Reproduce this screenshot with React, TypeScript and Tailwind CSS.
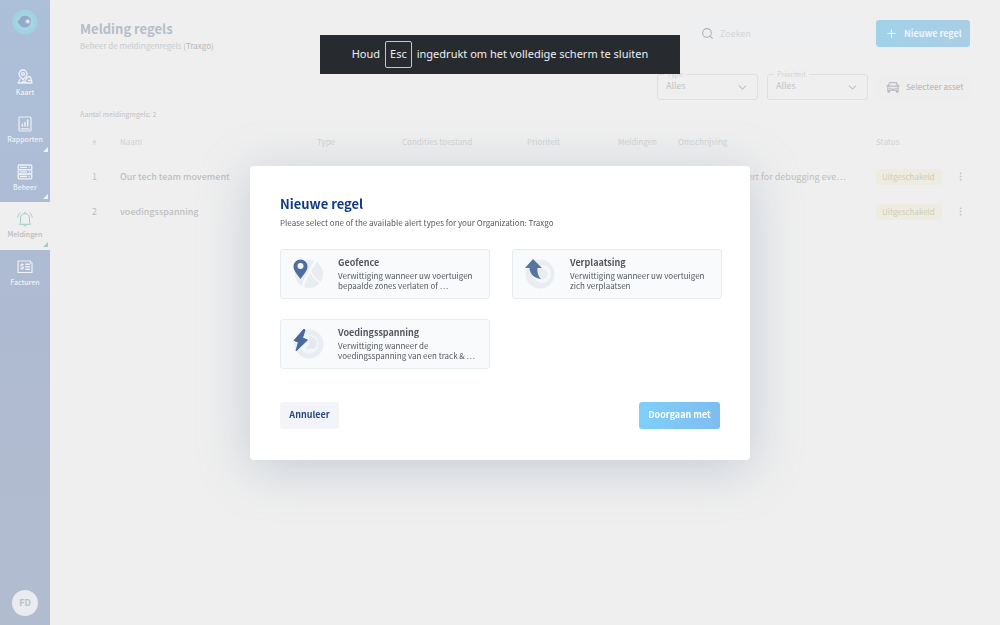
import React from "react";
import { ChevronDown, MoreVertical, Plus, Search } from "lucide-react";

type IconProps = { className?: string };

function Logo() {
  return (
    <svg viewBox="0 0 26 26" className="size-[26px]" aria-hidden="true">
      <circle cx="13" cy="13" r="12.5" fill="#9fd3e0" />
      <circle cx="13" cy="13" r="9" fill="#a9d5e2" />
      <path d="M5.500 13 9.500 7.500c3-1.500 7.500-.5 9 2.500 1 3-.5 7-3.500 8-2.500.8-5 .3-6.500-1z" fill="#8fabc6" />
      <circle cx="15.500" cy="12.500" r="2.500" fill="#c9b6d2" />
      <circle cx="15.800" cy="12.300" r="1.500" fill="#f3f0f6" />
    </svg>
  );
}

function MapIcon({ className }: IconProps) {
  return (
    <svg viewBox="0 0 16 16" className={className} fill="none" stroke="currentColor" strokeWidth="1.300" strokeLinejoin="round" strokeLinecap="round" aria-hidden="true">
      <path d="M6 10.500C3.600 8.500 2 7 2 5a4 4 0 0 1 8 0c0 2-1.600 3.500-4 5.500z" />
      <circle cx="6" cy="5" r="1.400" />
      <path d="M3 10.500 1 14h14l-1-4.500a2.200 2.200 0 0 0-4-.8L8.500 11M4.500 13.500 7 12l2.500 1.500M11.500 11.500h1.500" />
    </svg>
  );
}

function ReportIcon({ className }: IconProps) {
  return (
    <svg viewBox="0 0 16 16" className={className} fill="none" stroke="currentColor" strokeWidth="1.200" strokeLinecap="round" strokeLinejoin="round" aria-hidden="true">
      <rect x="2" y="1" width="12" height="14" rx="1" />
      <path d="M4 12.800h8" />
      <path d="M5.300 10V8.500M8 10V6.500M10.700 10V4" strokeWidth="1.500" />
    </svg>
  );
}

function ManageIcon({ className }: IconProps) {
  return (
    <svg viewBox="0 0 16 16" className={className} fill="none" stroke="currentColor" strokeWidth="1.300" strokeLinecap="round" strokeLinejoin="round" aria-hidden="true">
      <rect x="1.200" y="1" width="13.600" height="4.600" rx="1" />
      <rect x="1.200" y="5.600" width="13.600" height="4.600" rx="1" />
      <rect x="1.200" y="10.200" width="13.600" height="4.600" rx="1" />
      <path d="M3.500 3.300h6M3.500 7.900h6M3.500 12.500h6M12.300 3.300h.1M12.300 7.900h.1M12.300 12.500h.1" />
    </svg>
  );
}

function AlertIcon({ className }: IconProps) {
  return (
    <svg viewBox="0 0 16 16" className={className} fill="none" stroke="currentColor" strokeWidth="1" strokeLinecap="round" strokeLinejoin="round" aria-hidden="true">
      <path d="M8 1v1.300M2.500 13.300h11L12.500 11.500V7a4.500 4.500 0 0 0-9 0v4.500zM6.500 13.500a1.500 1.500 0 0 0 3 0" />
      <path d="M3 1.800A6 6 0 0 0 .8 6M13 1.800A6 6 0 0 1 15.200 6" />
    </svg>
  );
}

function InvoiceIcon({ className }: IconProps) {
  return (
    <svg viewBox="0 0 16 16" className={className} fill="none" stroke="currentColor" strokeWidth="1.200" strokeLinecap="round" strokeLinejoin="round" aria-hidden="true">
      <path d="M1 2h12.500v2H15v9.500H1z" />
      <path d="M6.300 5.700c-.5-.5-2.500-.6-2.500.6s2.600.8 2.600 2.100-2.100 1.300-2.700.6M5 4.700v.6M5 9.600v.7" />
      <path d="M8.800 5.300h3.700M8.800 7.800h3.700M8.800 10.300h3.700" strokeWidth="1.400" />
    </svg>
  );
}

function CarIcon({ className }: IconProps) {
  return (
    <svg viewBox="0 0 16 14" className={className} fill="none" stroke="currentColor" strokeWidth="1.500" strokeLinejoin="round" strokeLinecap="round" aria-hidden="true">
      <path d="M2.500 6 4 2h8l1.500 4M2 6h12v5H2zM2.300 11v2h1.600v-2M12.100 11v2h1.600v-2M1 5.300h1M14 5.300h1" />
      <path d="M4 8.500h1M11 8.500h1M6.500 9.500h3" />
    </svg>
  );
}

function GeofenceArt() {
  return (
    <svg viewBox="0 0 32 32" className="size-8" aria-hidden="true">
      <circle cx="17" cy="17" r="14" fill="#e9edf1" />
      <path d="M23.500 3.500C21 11 13 18 10.500 31" stroke="#f8fafc" strokeWidth="2.500" fill="none" />
      <path d="M19 15c2 5 5 8 10 11" stroke="#f8fafc" strokeWidth="1.500" fill="none" />
      <path d="M8.500 22C5 17 1.500 13.500 1.500 9.500a7 7 0 0 1 14 0C15.500 13.500 12 17 8.500 22z" fill="#4d6c9f" />
      <circle cx="8.500" cy="9" r="3" fill="#f5f8fb" />
    </svg>
  );
}

function MovementArt() {
  return (
    <svg viewBox="0 0 32 32" className="size-8" aria-hidden="true">
      <circle cx="16" cy="17" r="14.500" fill="#e9edf1" />
      <circle cx="18" cy="17" r="9" fill="#f5f7f9" />
      <circle cx="18" cy="17" r="5.500" fill="#e9edf1" />
      <path d="M9 2 1 11h4.500c.3 6 4.500 10 11.500 11-3-3-4-6.500-3.500-11H18z" fill="#56759f" />
    </svg>
  );
}

function VoltageArt() {
  return (
    <svg viewBox="0 0 32 32" className="size-8" aria-hidden="true">
      <circle cx="17" cy="17" r="14.500" fill="#e9edf1" />
      <circle cx="17" cy="17" r="9.500" fill="#f3f6f8" />
      <path d="M17 9v9l-4 4h9a7 7 0 0 0-1-12z" fill="#e5e9ee" />
      <path d="M12 2 2 13.500l4.500 1.500L4 24 15.500 13l-5-2L13 3z" fill="#47699b" stroke="#47699b" strokeLinejoin="round" />
    </svg>
  );
}

const navItems = [
  { label: "Kaart", Icon: MapIcon, corner: false, active: false },
  { label: "Rapporten", Icon: ReportIcon, corner: true, active: false },
  { label: "Beheer", Icon: ManageIcon, corner: true, active: false },
  { label: "Meldingen", Icon: AlertIcon, corner: true, active: true },
  { label: "Facturen", Icon: InvoiceIcon, corner: false, active: false },
];

function Sidebar() {
  return (
    <aside className="flex w-[50px] shrink-0 flex-col items-center bg-linear-to-b from-[#acc0d9] via-[#aebad1] to-[#b2bccf] pt-[9px] pb-[9px]">
      <Logo />
      <nav aria-label="Hoofdmenu" className="mt-[25px] grid h-[237px] w-full grid-rows-5">
        {navItems.map(({ label, Icon, corner, active }) => (
          <a
            key={label}
            href="#"
            className={
              active
                ? "relative flex flex-col items-center bg-[#efefef] pt-[9px] text-[#b9bcc0]"
                : "relative flex flex-col items-center pt-[9px] text-[#eef1f5]"
            }
          >
            <Icon className={active ? "size-4 text-[#a2cdcf]" : "size-4"} />
            <span className="mt-[2px] text-[7px] leading-[10px] font-medium">{label}</span>
            {corner && (
              <svg viewBox="0 0 4 4" className={active ? "absolute right-[2px] bottom-[3px] size-[5px] text-[#a2cdcf]" : "absolute right-[2px] bottom-[3px] size-[5px]"} aria-hidden="true">
                <path d="M4 0v4H0z" fill="currentColor" />
              </svg>
            )}
          </a>
        ))}
      </nav>
      <button type="button" className="mt-auto flex size-[26px] items-center justify-center rounded-full bg-[#e9ebef] text-[9px] font-bold text-[#bcc0c5]">
        FD
      </button>
    </aside>
  );
}

function Filter({ id, label }: { id: string; label: string }) {
  return (
    <div className="relative h-[26px] w-[101px] rounded-[3px] border border-[#dedfe0]">
      <label htmlFor={id} className="absolute -top-[6px] left-[6px] bg-[#efefef] px-[3px] text-[7px] leading-[10px] text-[#d2d4d6]">
        {label}
      </label>
      <select id={id} className="block h-6 w-full appearance-none bg-transparent px-2 pb-[2px] text-[9px] leading-[22px] text-[#c3c5c8]">
        <option>Alles</option>
      </select>
      <ChevronDown className="pointer-events-none absolute top-[6px] right-[8px] size-[13px] text-[#c0c3c6]" />
    </div>
  );
}

const rules = [
  { nr: 1, name: "Our tech team movement", description: "Our tech team alert for debugging eve…" },
  { nr: 2, name: "voedingsspanning", description: "" },
];

function RulesTable() {
  return (
    <table className="mt-[5px] w-full table-fixed text-left">
      <thead>
        <tr className="h-[35px] text-[8px] text-[#d0d2d4]">
          <th className="w-[40px] pl-3 font-normal">#</th>
          <th className="w-[197px] font-normal">Naam</th>
          <th className="w-[85px] font-normal">Type</th>
          <th className="w-[125px] font-normal">Condities toestand</th>
          <th className="w-[91px] font-normal">Prioriteit</th>
          <th className="w-[60px] font-normal">Meldingen</th>
          <th className="font-normal">Omschrijving</th>
          <th className="w-[79px] font-normal">Status</th>
          <th className="w-[15px]" aria-label="Acties" />
        </tr>
      </thead>
      <tbody>
        {rules.map((rule) => (
          <tr key={rule.nr} className="h-[35px] text-[9px] text-[#bdbfc2]">
            <td className="pl-3">{rule.nr}</td>
            <td className="whitespace-nowrap font-medium">{rule.name}</td>
            <td />
            <td />
            <td />
            <td />
            <td className="whitespace-nowrap">{rule.description}</td>
            <td>
              <span className="block h-4 w-[66px] rounded-[4px] bg-[#eeece0] px-[6px] text-[8px] leading-4 text-[#cfccb8]">Uitgeschakeld</span>
            </td>
            <td>
              <button type="button" aria-label="Meer opties" className="flex w-[11px] justify-center">
                <MoreVertical className="size-[11px]" />
              </button>
            </td>
          </tr>
        ))}
      </tbody>
    </table>
  );
}

function Page() {
  return (
    <main className="min-w-0 flex-1 bg-[#efefef] px-[30px]">
      <header className="flex items-start justify-between pt-5">
        <div>
          <h1 className="text-[13px] leading-[18px] font-bold text-[#b7bdc9]">Melding regels</h1>
          <p className="mt-[3px] text-[8px] leading-[10px] text-[#c8cacc]">
            Beheer de meldingenregels <span className="text-[#b5b7bb]">(Traxgo)</span>
          </p>
        </div>
        <div className="flex gap-[9px]">
          <label className="flex h-[27px] w-[175px] items-center gap-[6px] rounded-[3px] bg-[#eeeff1] px-[9px]">
            <Search className="size-[13px] shrink-0 text-[#b0b3b7]" />
            <input type="search" aria-label="Zoeken" placeholder="Zoeken" className="w-full min-w-0 bg-transparent text-[9px] outline-none placeholder:text-[#d4d6d8]" />
          </label>
          <button type="button" className="flex h-[27px] w-[94px] items-center gap-[6px] rounded-[3px] bg-linear-to-r from-[#a0d2e9] to-[#a9cee6] pl-[9px] text-[9px] font-bold whitespace-nowrap text-[#eef4f7]">
            <Plus className="size-[13px]" />
            Nieuwe regel
          </button>
        </div>
      </header>
      <div className="mt-[23px] flex items-center justify-end gap-[9px]">
        <Filter id="filter-type" label="Type" />
        <Filter id="filter-priority" label="Prioriteit" />
        <button type="button" className="flex h-[26px] w-[93px] items-center gap-[6px] rounded-[3px] bg-[#eeeeef] pl-[9px] text-[8px] font-medium whitespace-nowrap text-[#b9bcc0]">
          <CarIcon className="h-3 w-[14px]" />
          Selecteer asset
        </button>
      </div>
      <p className="mt-[9px] text-[7px] leading-[10px] text-[#c0c2c5]">Aantal meldingregels: 2</p>
      <RulesTable />
    </main>
  );
}

const alertTypes = [
  { title: "Geofence", text: ["Verwittiging wanneer uw voertuigen", "bepaalde zones verlaten of …"], Art: GeofenceArt },
  { title: "Verplaatsing", text: ["Verwittiging wanneer uw voertuigen", "zich verplaatsen"], Art: MovementArt },
  { title: "Voedingsspanning", text: ["Verwittiging wanneer de", "voedingsspanning van een track & …"], Art: VoltageArt },
];

function NewRuleDialog() {
  return (
    <div className="fixed inset-0 flex items-center justify-center">
      <section role="dialog" aria-modal="true" aria-labelledby="dialog-title" className="w-[500px] rounded-[4px] bg-white pt-[29px] pr-[28px] pb-[31px] pl-[30px] shadow-[0_8px_50px_#8b9bb36b]">
        <h2 id="dialog-title" className="text-[13px] leading-[18px] font-bold text-[#123a80]">Nieuwe regel</h2>
        <p className="mt-[5px] text-[8px] leading-[10px] text-[#55585d]">
          Please select one of the available alert types for your Organization: Traxgo
        </p>
        <div className="mt-[21px] grid grid-cols-2 gap-x-[22px] gap-y-5">
          {alertTypes.map(({ title, text, Art }) => (
            <button key={title} type="button" className="flex h-[50px] gap-[14px] rounded-[3px] border border-[#e7ecef] bg-[#f8fafc] pt-[7px] pl-[11px] text-left">
              <Art />
              <span className="flex flex-col whitespace-nowrap">
                <span className="text-[9px] leading-[12px] font-bold text-[#53565c]">{title}</span>
                <span className="mt-[2px] text-[8px] leading-[10px] text-[#55585d]">
                  {text[0]}
                  <br />
                  {text[1]}
                </span>
              </span>
            </button>
          ))}
        </div>
        <div className="mt-[33px] flex justify-between pr-[2px]">
          <button type="button" className="h-[27px] w-[59px] rounded-[3px] bg-[#f2f4f9] text-[9px] font-bold text-[#294a85]">Annuleer</button>
          <button type="button" className="h-[27px] w-[81px] rounded-[3px] bg-linear-to-r from-[#7fcffa] to-[#7dbdf0] text-[9px] font-bold text-white">Doorgaan met</button>
        </div>
      </section>
    </div>
  );
}

function FullscreenNotice() {
  return (
    <div className="pointer-events-none fixed inset-x-0 top-[35px] flex justify-center">
      <p role="status" className="flex h-[39px] w-[360px] items-center justify-center gap-[5px] bg-[#272b30] font-['Noto_Sans',sans-serif] text-[11px] whitespace-nowrap text-[#eeeff0]">
        Houd
        <kbd className="flex h-[27px] items-center rounded-[2px] border border-[#c5c7c9] px-1 font-['Noto_Sans',sans-serif] text-[11px]">Esc</kbd>
        ingedrukt om het volledige scherm te sluiten
      </p>
    </div>
  );
}

export default function App() {
  return (
    <div className="flex min-h-screen bg-[#efefef] font-['Noto_Sans_CJK_JP',sans-serif]">
      <Sidebar />
      <Page />
      <NewRuleDialog />
      <FullscreenNotice />
    </div>
  );
}
